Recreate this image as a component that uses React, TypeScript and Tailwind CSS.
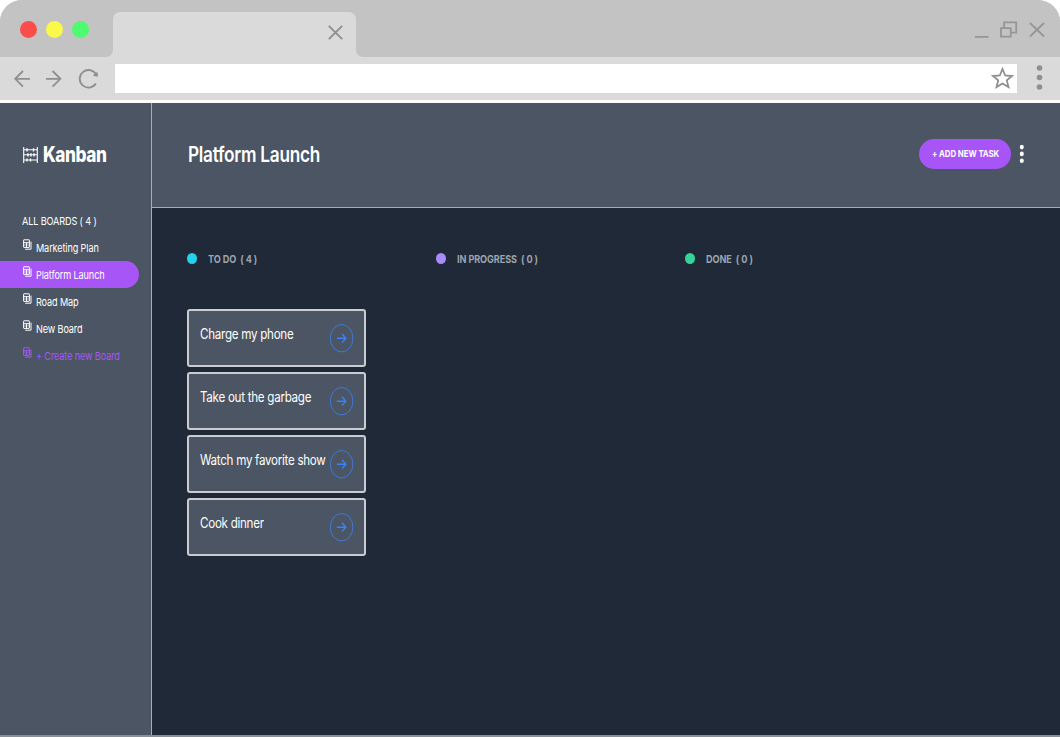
import React from "react";

type SqueezeProps = { className?: string; children: React.ReactNode };

function Squeeze({ className = "", children }: SqueezeProps) {
  return <span className={`block origin-left whitespace-pre ${className}`}>{children}</span>;
}

function BoardIcon() {
  return (
    <svg className="-ml-[0.5px] h-[11px] w-[9px] shrink-0" viewBox="0 0 9 11" fill="none" stroke="currentColor" strokeWidth="1">
      <rect x="0.6" y="0.8" width="5.8" height="7.6" rx="0.4" />
      <path d="M0.5 3.7H6.5M3.5 3.7V8.4" strokeWidth="1" />
      <path d="M0.5 6H6.5" strokeWidth="0.6" />
      <path d="M8 2.6V10.2H2.2" />
    </svg>
  );
}

function Chrome() {
  return (
    <div className="h-[103px] bg-white">
      <div className="h-[100px] overflow-hidden rounded-t-[22px] bg-[#dadada]">
        <div className="flex h-[57px] bg-[#dadada]">
          <div className="flex w-[113px] gap-[9px] rounded-br-[7px] bg-[#c3c3c3] pt-[21px] pl-5">
            <i className="size-[17px] rounded-full bg-[#fa4d4c]" />
            <i className="size-[17px] rounded-full bg-[#faf84b]" />
            <i className="size-[17px] rounded-full bg-[#4dfa70]" />
          </div>
          <div className="w-[243px] bg-[#c3c3c3] pt-3">
            <div className="flex h-[45px] justify-end rounded-t-[7px] bg-[#dadada] pt-[13px] pr-[13px]">
              <svg className="size-[15px]" viewBox="0 0 15 15" fill="none" stroke="#8f8f8f" strokeWidth="1.9">
                <path d="M0.8 0.8L14.2 14.2M14.2 0.8L0.8 14.2" />
              </svg>
            </div>
          </div>
          <div className="flex flex-1 justify-end rounded-bl-[7px] bg-[#c3c3c3] pt-5 pr-[15px]">
            <svg className="h-5 w-[70px]" viewBox="0 0 70 20" fill="none" stroke="#969696" strokeWidth="1.8">
              <path d="M0 16.8H13.5M26 8.2H35.8V16.7H26ZM29 8V2.4H41.2V12.7H36M55 3L69 16.5M69 3L55 16.5" />
            </svg>
          </div>
        </div>
        <div className="flex h-[43px] pt-[7px]">
          <svg className="h-[30px] w-[115px]" viewBox="0 0 115 30" fill="none" stroke="#8f8f8f" strokeWidth="1.8">
            <path d="M30 14.8H15.5M23 7L15.2 14.8L23 22.6M46 14.8H60M52.6 7L60.4 14.8L52.6 22.6" />
            <path d="M96 10.2A8.8 8.8 0 1 0 95.9 19.6" />
            <path d="M97.2 8.6V12.2L93.5 11.4Z" fill="#8f8f8f" strokeWidth="1" />
          </svg>
          <div className="flex h-[29px] w-[902px] justify-end bg-white pt-[3px] pr-[3px]">
            <svg className="size-[23px]" viewBox="0 0 23 23" fill="none" stroke="#8f8f8f" strokeWidth="1.8">
              <path d="M11.5 2L14.2 8.5L21 9L15.8 13.4L17.5 20.1L11.5 16.5L5.5 20.1L7.2 13.4L2 9L8.8 8.5Z" />
            </svg>
          </div>
          <svg className="ml-[19px] h-[27px] w-[7px]" viewBox="0 0 7 27" fill="#8f8f8f">
            <circle cx="3.5" cy="4" r="2.8" />
            <circle cx="3.5" cy="13.5" r="2.8" />
            <circle cx="3.5" cy="23" r="2.8" />
          </svg>
        </div>
      </div>
    </div>
  );
}

const boards = ["Marketing Plan", "Platform Launch", "Road Map", "New Board"];

function Sidebar() {
  return (
    <aside className="w-[152px] border-r border-[#a9adb3] bg-[#4b5563] text-white">
      <div className="flex h-[104px] items-center pl-[23px]">
        <svg className="mr-[6px] h-4 w-[15px]" viewBox="0 0 15 16" fill="none" stroke="#fff" strokeWidth="1.1">
          <path d="M0.7 0V16M14.3 0V16M0.7 2.8H14.3M0.7 7.8H14.3M0.7 13H14.3" />
          <path d="M4 1.2V4.4M10.5 1.2V4.4M5 6.2V9.4M8 6.2V9.4M11 6.2V9.4M4 11.4V14.6M7.5 11.4V14.6" strokeWidth="1.4" />
        </svg>
        <Squeeze className="-ml-px scale-x-[0.82] text-[21px] font-extrabold tracking-[-0.5px]">Kanban</Squeeze>
      </div>
      <Squeeze className="mt-[6px] ml-[22px] h-[21px] scale-x-[0.83] text-[11px] leading-[16px] tracking-[-0.16px]">ALL BOARDS ( 4 )</Squeeze>
      <nav>
        {boards.map((b) => (
          <div key={b} className={`flex h-[27px] w-[139px] pt-[5px] pl-[23px] ${b === "Platform Launch" ? "rounded-r-[14px] bg-[#a855f7]" : ""}`}>
            <BoardIcon />
            <Squeeze className="ml-1 scale-x-[0.83] text-[11px] leading-[18px] tracking-[-0.15px]">{b}</Squeeze>
          </div>
        ))}
        <div className="flex h-[27px] pt-[5px] pl-[23px] text-[#a855f7]">
          <BoardIcon />
          <Squeeze className="ml-1 scale-x-[0.83] text-[11px] leading-[18px] tracking-[-0.15px]">+ Create new Board</Squeeze>
        </div>
      </nav>
    </aside>
  );
}

function Card({ title }: { title: string }) {
  return (
    <div className="flex h-[58px] w-[179px] rounded-[3px] border-2 border-[#c9cdd2] bg-[#4b5563] pl-[11px] text-white">
      <Squeeze className="w-[130px] scale-x-[0.83] pt-[13px] text-[14px] leading-5 tracking-[-0.34px]">{title}</Squeeze>
      <svg className="mt-[13px] h-[29px] w-6 shrink-0" viewBox="0 0 24 29" fill="none" stroke="#3b82f6">
        <ellipse cx="11.6" cy="14.2" rx="11.3" ry="13.7" strokeWidth="0.8" />
        <path d="M6.8 14.2H15.6M12 9.8L15.8 14.2L12 18.6" strokeWidth="1.4" />
      </svg>
    </div>
  );
}

const tasks = ["Charge my phone", "Take out the garbage", "Watch my favorite show", "Cook dinner"];

function Heading({ dot, label }: { dot: string; label: string }) {
  return (
    <div className="flex h-[101px] items-start pt-[45px]">
      <i className={`h-[11px] w-[10px] rounded-[50%] ${dot}`} />
      <Squeeze className="-mt-[2px] ml-[11px] scale-x-[0.83] text-[11px] leading-4 font-bold tracking-[-0.12px]">{label}</Squeeze>
    </div>
  );
}

export default function App() {
  return (
    <div className="flex h-[737px] w-[1060px] flex-col overflow-hidden bg-white font-['Inter',sans-serif]">
      <Chrome />
      <div className="flex h-[634px] border-b-2 border-[#8b9098]">
        <Sidebar />
        <main className="flex-1 bg-[#1f2937]">
          <header className="flex h-[105px] items-start border-b border-[#a9adb3] bg-[#4b5563] pt-9 pl-9 text-white">
            <Squeeze className="w-[731px] scale-x-[0.82] text-[21px] leading-[31px] font-semibold tracking-[-0.32px]">Platform Launch</Squeeze>
            <button className="h-[30px] w-[92px] rounded-full bg-[#a855f7] pl-[13px]">
              <Squeeze className="scale-x-[0.83] text-left text-[9.5px] font-bold tracking-[-0.1px]">+ ADD NEW TASK</Squeeze>
            </button>
            <svg className="mt-[5px] ml-2 h-5 w-[6px]" viewBox="0 0 6 20" fill="#fff">
              <ellipse cx="2.8" cy="3.1" rx="2" ry="2.3" />
              <ellipse cx="2.8" cy="9.9" rx="2" ry="2.3" />
              <ellipse cx="2.8" cy="16.7" rx="2" ry="2.3" />
            </svg>
          </header>
          <div className="flex pl-[35px] text-[#9ca3af]">
            <section className="w-[249px]">
              <Heading dot="bg-[#22d3ee]" label="TO DO  ( 4 )" />
              <div className="flex flex-col gap-[5px]">
                {tasks.map((t) => <Card key={t} title={t} />)}
              </div>
            </section>
            <section className="w-[249px]">
              <Heading dot="bg-[#a78bfa]" label="IN PROGRESS  ( 0 )" />
            </section>
            <section className="w-[249px]">
              <Heading dot="bg-[#34d399]" label="DONE  ( 0 )" />
            </section>
          </div>
        </main>
      </div>
    </div>
  );
}
